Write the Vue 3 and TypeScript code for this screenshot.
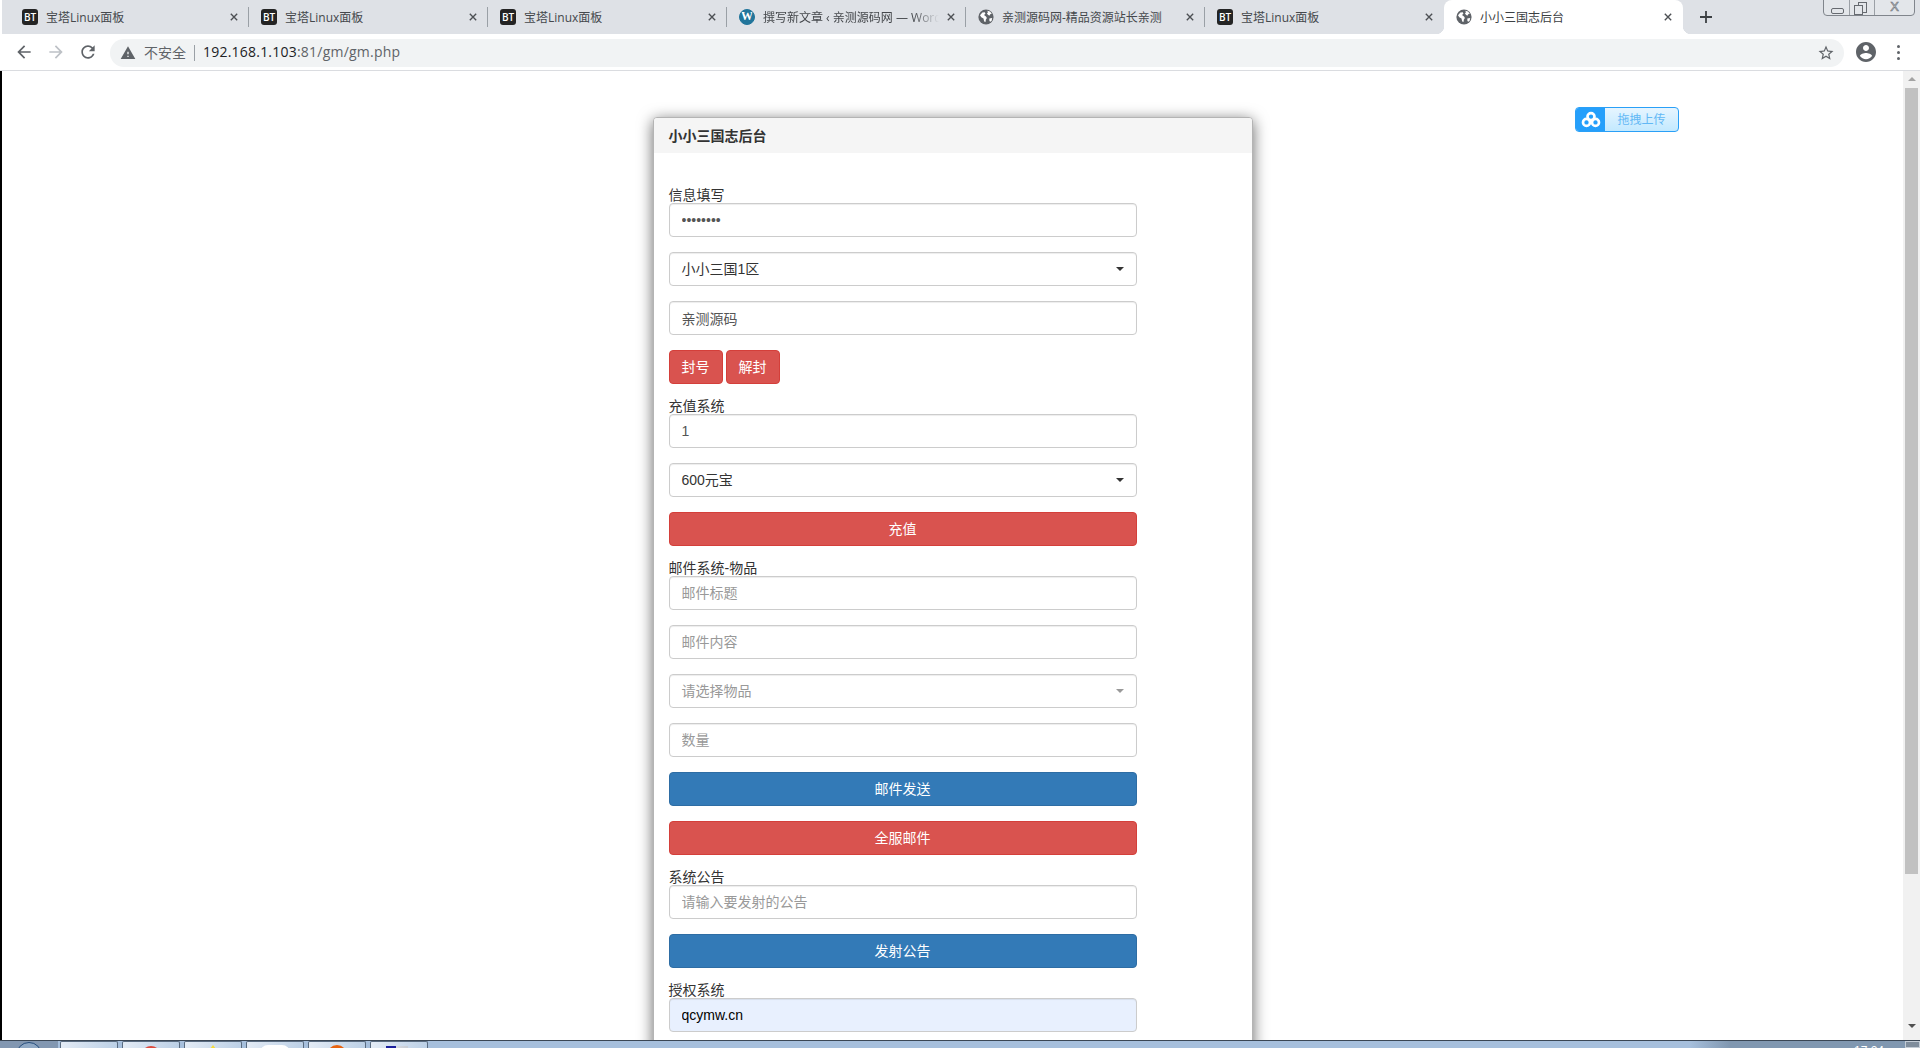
<script setup lang="ts">
interface Tab { title: string; icon: 'bt' | 'wp' | 'globe'; active?: boolean; fade?: boolean }
const tabs: Tab[] = [
  { title: '宝塔Linux面板', icon: 'bt' },
  { title: '宝塔Linux面板', icon: 'bt' },
  { title: '宝塔Linux面板', icon: 'bt' },
  { title: '撰写新文章 ‹ 亲测源码网 — WordPress', icon: 'wp', fade: true },
  { title: '亲测源码网-精品资源站长亲测', icon: 'globe' },
  { title: '宝塔Linux面板', icon: 'bt' },
  { title: '小小三国志后台', icon: 'globe', active: true },
]
const taskIcons = ['t-folder', 't-red', 't-yellow', 't-white', 't-orange', 't-flag']
</script>

<template>
  <div class="screen">
    <div class="tabbar">
      <div v-for="(t, i) in tabs" :key="i" class="tab" :class="{ active: t.active, nosep: i === 5 }">
        <span v-if="t.icon === 'bt'" class="fav-bt">BT</span>
        <span v-else-if="t.icon === 'wp'" class="fav-wp"><span>W</span></span>
        <svg v-else class="fav-globe" viewBox="0 0 16 16">
          <circle cx="8" cy="8" r="7.6" fill="#5f6368" />
          <path fill="#fff" d="M2 6.2l2.4-2.6 2.4-.4.6 1.6-1.4 1.2 2 1.6.9 1.4-1 1.4-.4 2.6-1.3-.6-.7-3-2.2-1.2z" />
          <path fill="#fff" d="M9.4 1.8l2.6.8 1.8 2.2-1.6.5-.8 1.5-1.5-1-1-1.6 1-.7z" />
          <path fill="#fff" d="M11.3 9.4l2.9-.5-.5 2.4-1.6 1.8-.7-1.7z" />
        </svg>
        <span class="tab-title" :class="{ fade: t.fade }">{{ t.title }}</span>
        <svg class="tab-x" viewBox="0 0 10 10"><path d="M1 1l8 8M9 1l-8 8" /></svg>
      </div>
      <svg class="plus" viewBox="0 0 12 12"><path d="M6 0v12M0 6h12" /></svg>
      <div class="winctl">
        <span class="wc wc-min"><i></i></span>
        <span class="wc wc-max"><i></i><b></b></span>
        <span class="wc wc-close">X</span>
      </div>
    </div>

    <div class="toolbar">
      <svg class="nav" viewBox="0 0 24 24"><path fill="#5f6368" d="M20 11H7.83l5.59-5.59L12 4l-8 8 8 8 1.41-1.41L7.83 13H20v-2z" /></svg>
      <svg class="nav" viewBox="0 0 24 24"><path fill="#bdc1c6" d="M4 11h12.17l-5.59-5.59L12 4l8 8-8 8-1.41-1.41L16.17 13H4v-2z" /></svg>
      <svg class="nav" viewBox="0 0 24 24"><path fill="#5f6368" d="M17.65 6.35C16.2 4.9 14.21 4 12 4c-4.42 0-7.99 3.58-7.99 8s3.57 8 7.99 8c3.73 0 6.84-2.55 7.73-6h-2.08c-.82 2.33-3.04 4-5.65 4-3.31 0-6-2.69-6-6s2.69-6 6-6c1.66 0 3.14.69 4.22 1.78L13 11h7V4l-2.35 2.35z" /></svg>
      <div class="omnibox">
        <svg class="warn" viewBox="0 0 24 24"><path fill="#5f6368" d="M1 21h22L12 2 1 21zm12-3h-2v-2h2v2zm0-4h-2v-4h2v4z" /></svg>
        <span class="insecure">不安全</span>
        <span class="omni-sep"></span>
        <span class="url"><span class="host">192.168.1.103</span>:81/gm/gm.php</span>
        <svg class="star" viewBox="0 0 24 24"><path fill="#5f6368" d="M22 9.24l-7.19-.62L12 2 9.19 8.63 2 9.24l5.46 4.73L5.82 21 12 17.27 18.18 21l-1.63-7.03L22 9.24zM12 15.4l-3.76 2.27 1-4.28-3.32-2.88 4.38-.38L12 6.1l1.71 4.04 4.38.38-3.32 2.88 1 4.28L12 15.4z" /></svg>
      </div>
      <svg class="avatar" viewBox="2 2 20 20"><path fill="#5f6368" d="M12 2C6.48 2 2 6.48 2 12s4.48 10 10 10 10-4.48 10-10S17.52 2 12 2zm0 3c1.66 0 3 1.34 3 3s-1.34 3-3 3-3-1.34-3-3 1.34-3 3-3zm0 14.2c-2.5 0-4.71-1.28-6-3.22.03-1.99 4-3.08 6-3.08 1.99 0 5.97 1.09 6 3.08-1.29 1.94-3.5 3.22-6 3.22z" /></svg>
      <div class="menu"><i></i><i></i><i></i></div>
    </div>

    <div class="viewport">
      <div class="strip"></div>
      <main class="page">
        <section class="panel">
          <header class="panel-head">小小三国志后台</header>
          <div class="panel-body">
            <label>信息填写</label>
            <input class="ctl" type="password" value="qcymw123" />
            <div class="ctl sel">小小三国1区<span class="caret"></span></div>
            <input class="ctl" type="text" value="亲测源码" />
            <div class="btn-row">
              <button class="btn danger">封号</button>
              <button class="btn danger">解封</button>
            </div>

            <label>充值系统</label>
            <input class="ctl" type="text" value="1" />
            <div class="ctl sel">600元宝<span class="caret"></span></div>
            <button class="btn danger block">充值</button>

            <label>邮件系统-物品</label>
            <input class="ctl" type="text" placeholder="邮件标题" />
            <input class="ctl" type="text" placeholder="邮件内容" />
            <div class="ctl sel muted">请选择物品<span class="caret"></span></div>
            <input class="ctl" type="text" placeholder="数量" />
            <button class="btn primary block">邮件发送</button>
            <button class="btn danger block">全服邮件</button>

            <label>系统公告</label>
            <input class="ctl" type="text" placeholder="请输入要发射的公告" />
            <button class="btn primary block">发射公告</button>

            <label>授权系统</label>
            <input class="ctl autofill" type="text" value="qcymw.cn" />
          </div>
        </section>
        <div class="baidu">
          <span class="baidu-ico">
            <svg viewBox="0 0 24 20"><g fill="none" stroke="#fff" stroke-width="3.2"><circle cx="12" cy="6.5" r="4.2" /><circle cx="6.6" cy="13.5" r="4.2" /><circle cx="17.4" cy="13.5" r="4.2" /></g></svg>
          </span>
          <span class="baidu-text">拖拽上传</span>
        </div>
      </main>
      <div class="scrollbar">
        <span class="arrow up"></span>
        <span class="thumb"></span>
        <span class="arrow down"></span>
      </div>
    </div>

    <footer class="taskbar">
      <div class="orb"><i></i></div>
      <div v-for="c in taskIcons" :key="c" class="task"><i :class="c"></i></div>
      <div class="task-fill"></div>
      <span class="clock">17:24</span>
      <span class="showdesk"></span>
    </footer>
  </div>
</template>

<style scoped>
.screen {
  width: 1920px;
  height: 1048px;
  display: flex;
  flex-direction: column;
  overflow: hidden;
  background: #fff;
  font-family: "Liberation Sans", "Noto Sans CJK SC", sans-serif;
  font-size: 14px;
  color: #333;
}

/* ---------- tabs ---------- */
.tabbar {
  position: relative;
  flex: 0 0 34px;
  display: flex;
  margin-left: 2px;
  padding-left: 8px;
  background: #dee1e6;
}
.tab {
  position: relative;
  width: 239px;
  display: flex;
  align-items: center;
  padding: 0 11px 0 12px;
  box-sizing: border-box;
  font-size: 12px;
  color: #45484c;
}
.tab::after {
  content: "";
  position: absolute;
  right: 0;
  top: 7px;
  width: 1px;
  height: 20px;
  background: #9aa0a6;
}
.tab.nosep::after { display: none; }
.tab.active {
  background: #fff;
  border-radius: 8px 8px 0 0;
  color: #3c4043;
}
.tab.active::before,
.tab.active::after {
  content: "";
  position: absolute;
  top: auto;
  bottom: 0;
  width: 8px;
  height: 8px;
  background: radial-gradient(circle at 0 0, transparent 8px, #fff 8.5px);
}
.tab.active::before { left: -8px; }
.tab.active::after {
  right: -8px;
  background: radial-gradient(circle at 100% 0, transparent 8px, #fff 8.5px);
}
.fav-bt {
  flex: none;
  width: 16px;
  height: 16px;
  border-radius: 3px;
  background: #242424;
  color: #fff;
  font: 10px/16px "Open Sans", "Liberation Sans", sans-serif;
  font-weight: 600;
  text-align: center;
}
.fav-wp {
  flex: none;
  width: 16px;
  height: 16px;
  border-radius: 50%;
  box-sizing: border-box;
  border: 1.5px solid #21759b;
  background: #21759b;
  color: #fff;
  font: bold 12px/13px "Liberation Serif", serif;
  text-align: center;
  overflow: hidden;
}
.fav-globe { flex: none; width: 16px; height: 16px; }
.tab-title {
  flex: 1;
  min-width: 0;
  margin: 0 0 0 8px;
  font-family: "Open Sans", "Noto Sans CJK SC", sans-serif;
  white-space: nowrap;
  overflow: hidden;
}
.tab-title.fade {
  -webkit-mask-image: linear-gradient(to right, #000 85%, transparent 100%);
  mask-image: linear-gradient(to right, #000 85%, transparent 100%);
}
.tab-x {
  flex: none;
  width: 8px;
  height: 8px;
  margin-left: 8px;
  fill: none;
  stroke: #4c4f53;
  stroke-width: 1.7;
}
.plus {
  flex: none;
  width: 12px;
  height: 12px;
  margin: 11px 0 0 17px;
  fill: none;
  stroke: #3c4043;
  stroke-width: 1.8;
}
.winctl {
  position: absolute;
  top: -1px;
  right: 5px;
  width: 92px;
  height: 17px;
  display: flex;
  box-sizing: border-box;
  border: 1px solid #80858c;
  border-radius: 0 0 4px 4px;
  background: #e3e6ea;
}
.wc {
  position: relative;
  height: 100%;
  border-right: 1px solid #9ba0a6;
  box-sizing: border-box;
}
.wc-min { width: 26px; }
.wc-max { width: 25px; }
.wc-close {
  flex: 1;
  border: 0;
  text-align: center;
  font: 13px/14px "Liberation Sans", sans-serif;
  color: #e9ebee;
  -webkit-text-stroke: 0.6px #6b7076;
}
.wc-min i {
  position: absolute;
  left: 7px;
  top: 8px;
  width: 11px;
  height: 4px;
  border: 1px solid #666a70;
  border-radius: 2px;
}
.wc-max i {
  position: absolute;
  left: 8px;
  top: 2px;
  width: 7px;
  height: 9px;
  border: 1px solid #666a70;
}
.wc-max b {
  position: absolute;
  left: 4px;
  top: 5px;
  width: 7px;
  height: 8px;
  border: 1px solid #666a70;
  background: #e3e6ea;
}

/* ---------- toolbar ---------- */
.toolbar {
  flex: 0 0 36px;
  display: flex;
  align-items: center;
  padding-left: 14px;
  box-sizing: content-box;
  background: #fff;
  border-bottom: 1px solid #dadce0;
}
.nav { flex: none; width: 20px; height: 20px; margin-right: 12px; }
.omnibox {
  flex: none;
  width: 1734px;
  height: 28px;
  margin: 1px 0 0 0;
  display: flex;
  align-items: center;
  padding: 0 8px 0 10px;
  box-sizing: border-box;
  border-radius: 14px;
  background: #f1f3f4;
}
.warn { flex: none; width: 16px; height: 16px; }
.insecure { margin: 0 0 2px 8px; font-size: 14px; color: #5f6368; white-space: nowrap; }
.omni-sep { flex: none; width: 1px; height: 16px; margin: 0 8px; background: #9aa0a6; }
.url {
  flex: 1;
  margin-bottom: 2px;
  font: 14px "Open Sans", sans-serif;
  letter-spacing: 0.22px;
  color: #5f6368;
  white-space: nowrap;
}
.host { color: #202124; }
.star { flex: none; width: 18px; height: 18px; margin-right: 1px; }
.avatar { flex: none; width: 20px; height: 20px; margin-left: 12px; }
.menu {
  flex: none;
  margin-left: 21px;
  display: flex;
  flex-direction: column;
  gap: 3px;
}
.menu i { display: block; width: 3px; height: 3px; border-radius: 50%; background: #5f6368; }

/* ---------- page ---------- */
.viewport {
  flex: 1;
  min-height: 0;
  display: flex;
}
.strip { flex: 0 0 2px; background: #000; }
.page {
  position: relative;
  flex: 1;
  min-width: 0;
  padding-top: 46px;
  overflow: hidden;
  background: #fff;
}
.panel {
  width: 600px;
  margin: 0 auto;
  box-sizing: border-box;
  border: 1px solid #b4b4b4;
  border-radius: 4px;
  background: #fff;
  box-shadow: 0 3px 15px rgba(0, 0, 0, 0.6);
}
.panel-head {
  height: 35px;
  box-sizing: border-box;
  padding: 1px 15px 0;
  line-height: 34px;
  font-weight: 700;
  color: #333;
  background: #f5f5f5;
  border-radius: 3px 3px 0 0;
}
.panel-body {
  width: 468px;
  margin-left: 15px;
  padding: 35px 0 40px;
  display: flex;
  flex-direction: column;
}
label {
  height: 15px;
  line-height: 15px;
  white-space: nowrap;
  color: #333;
}
.ctl {
  display: block;
  width: 468px;
  height: 34px;
  margin-bottom: 15px;
  padding: 6px 12px;
  box-sizing: border-box;
  border: 1px solid #ccc;
  border-radius: 4px;
  background: #fff;
  box-shadow: inset 0 1px 1px rgba(0, 0, 0, 0.075);
  font: 14px/20px "Liberation Sans", "Noto Sans CJK SC", sans-serif;
  color: #555;
  outline: none;
}
.ctl::placeholder { color: #999; opacity: 1; }
.autofill { background: #e8f0fe; color: #000; }
.sel {
  display: flex;
  align-items: center;
  justify-content: space-between;
  padding-right: 12px;
  color: #333;
}
.sel.muted { color: #999; }
.caret {
  width: 0;
  height: 0;
  border-top: 4px solid currentColor;
  border-left: 4px solid transparent;
  border-right: 4px solid transparent;
}
.btn-row { display: flex; gap: 3px; margin-bottom: 15px; }
.btn {
  height: 34px;
  padding: 6px 12px;
  box-sizing: border-box;
  border: 1px solid transparent;
  border-radius: 4px;
  font: 14px/20px "Liberation Sans", "Noto Sans CJK SC", sans-serif;
  color: #fff;
}
.block { display: block; width: 468px; margin-bottom: 15px; }
.danger { background: #d9534f; border-color: #d43f3a; }
.primary { background: #337ab7; border-color: #2e6da4; }

.baidu {
  position: absolute;
  left: 1573px;
  top: 36px;
  width: 104px;
  height: 25px;
  display: flex;
  box-sizing: border-box;
  border: 1px solid #2aa0f7;
  border-radius: 4px;
  overflow: hidden;
  background: linear-gradient(#e6f5ff, #c3e9ff);
}
.baidu-ico {
  flex: 0 0 29px;
  display: flex;
  align-items: center;
  justify-content: center;
  background: #259ffb;
}
.baidu-ico svg { width: 20px; height: 17px; }
.baidu-text {
  flex: 1;
  text-align: center;
  font-size: 12px;
  line-height: 25px;
  color: #62b8f5;
}

.scrollbar {
  flex: 0 0 17px;
  display: flex;
  flex-direction: column;
  align-items: center;
  background: #f1f1f1;
}
.arrow {
  flex: none;
  width: 0;
  height: 0;
  border-left: 4px solid transparent;
  border-right: 4px solid transparent;
}
.arrow.up { margin-top: 6px; border-bottom: 4px solid #a3a3a3; }
.arrow.down { margin-top: 150px; border-top: 4px solid #505050; }
.thumb { flex: none; width: 13px; height: 786px; margin-top: 7px; background: #c1c1c1; }

/* ---------- taskbar ---------- */
.taskbar {
  flex: 0 0 8px;
  display: flex;
  gap: 4px;
  overflow: hidden;
  border-top: 1px solid #3a4654;
  box-sizing: border-box;
  background: linear-gradient(to right, #a6bfdc 0, #a6bfdc 1690px, #8097b0 1730px, #8097b0 100%);
}
.orb {
  flex: 0 0 58px;
  margin-right: -2px;
  background: #8297b1;
  display: flex;
  justify-content: center;
}
.orb i {
  width: 26px;
  height: 26px;
  margin-top: 1px;
  border-radius: 50%;
  box-sizing: border-box;
  border: 1px solid #254d7c;
  background: #8fa8c4;
}
.task {
  flex: 0 0 58px;
  display: flex;
  justify-content: center;
  box-sizing: border-box;
  border: 1px solid #596b80;
  border-bottom: 0;
  border-radius: 2px 2px 0 0;
  background: linear-gradient(to right, #e3ebf5, #bcd0e6);
}
.task i { display: block; flex: none; }
.t-folder { width: 15px; height: 4px; margin-top: 6px; background: #c9ae7c; }
.t-red { width: 20px; height: 20px; margin-top: 4px; border-radius: 50%; background: #dc4a3d; }
.t-yellow {
  width: 0;
  height: 0;
  margin-top: 3px;
  border-left: 6px solid transparent;
  border-right: 6px solid transparent;
  border-bottom: 8px solid #f5dc3c;
}
.t-white { width: 30px; height: 20px; margin-top: 3px; border-radius: 8px; background: #fff; }
.t-orange { width: 20px; height: 20px; margin-top: 3px; border-radius: 50%; background: #e8630f; }
.t-flag {
  width: 22px;
  height: 8px;
  margin: 4px 0 0 -4px;
  background: linear-gradient(to right, #1a1f9c 0, #1a1f9c 45%, #d7dbe2 45%, #c8ccd4 100%);
}
.task-fill { flex: 1; }
.clock {
  flex: none;
  width: 40px;
  margin-right: 11px;
  padding-top: 3px;
  font: 12px/14px "Liberation Sans", sans-serif;
  color: #fff;
}
.showdesk {
  flex: 0 0 15px;
  margin-left: -4px;
  box-sizing: border-box;
  border: 1px solid #c3ccd6;
  background: #7f8d9c;
}
</style>
